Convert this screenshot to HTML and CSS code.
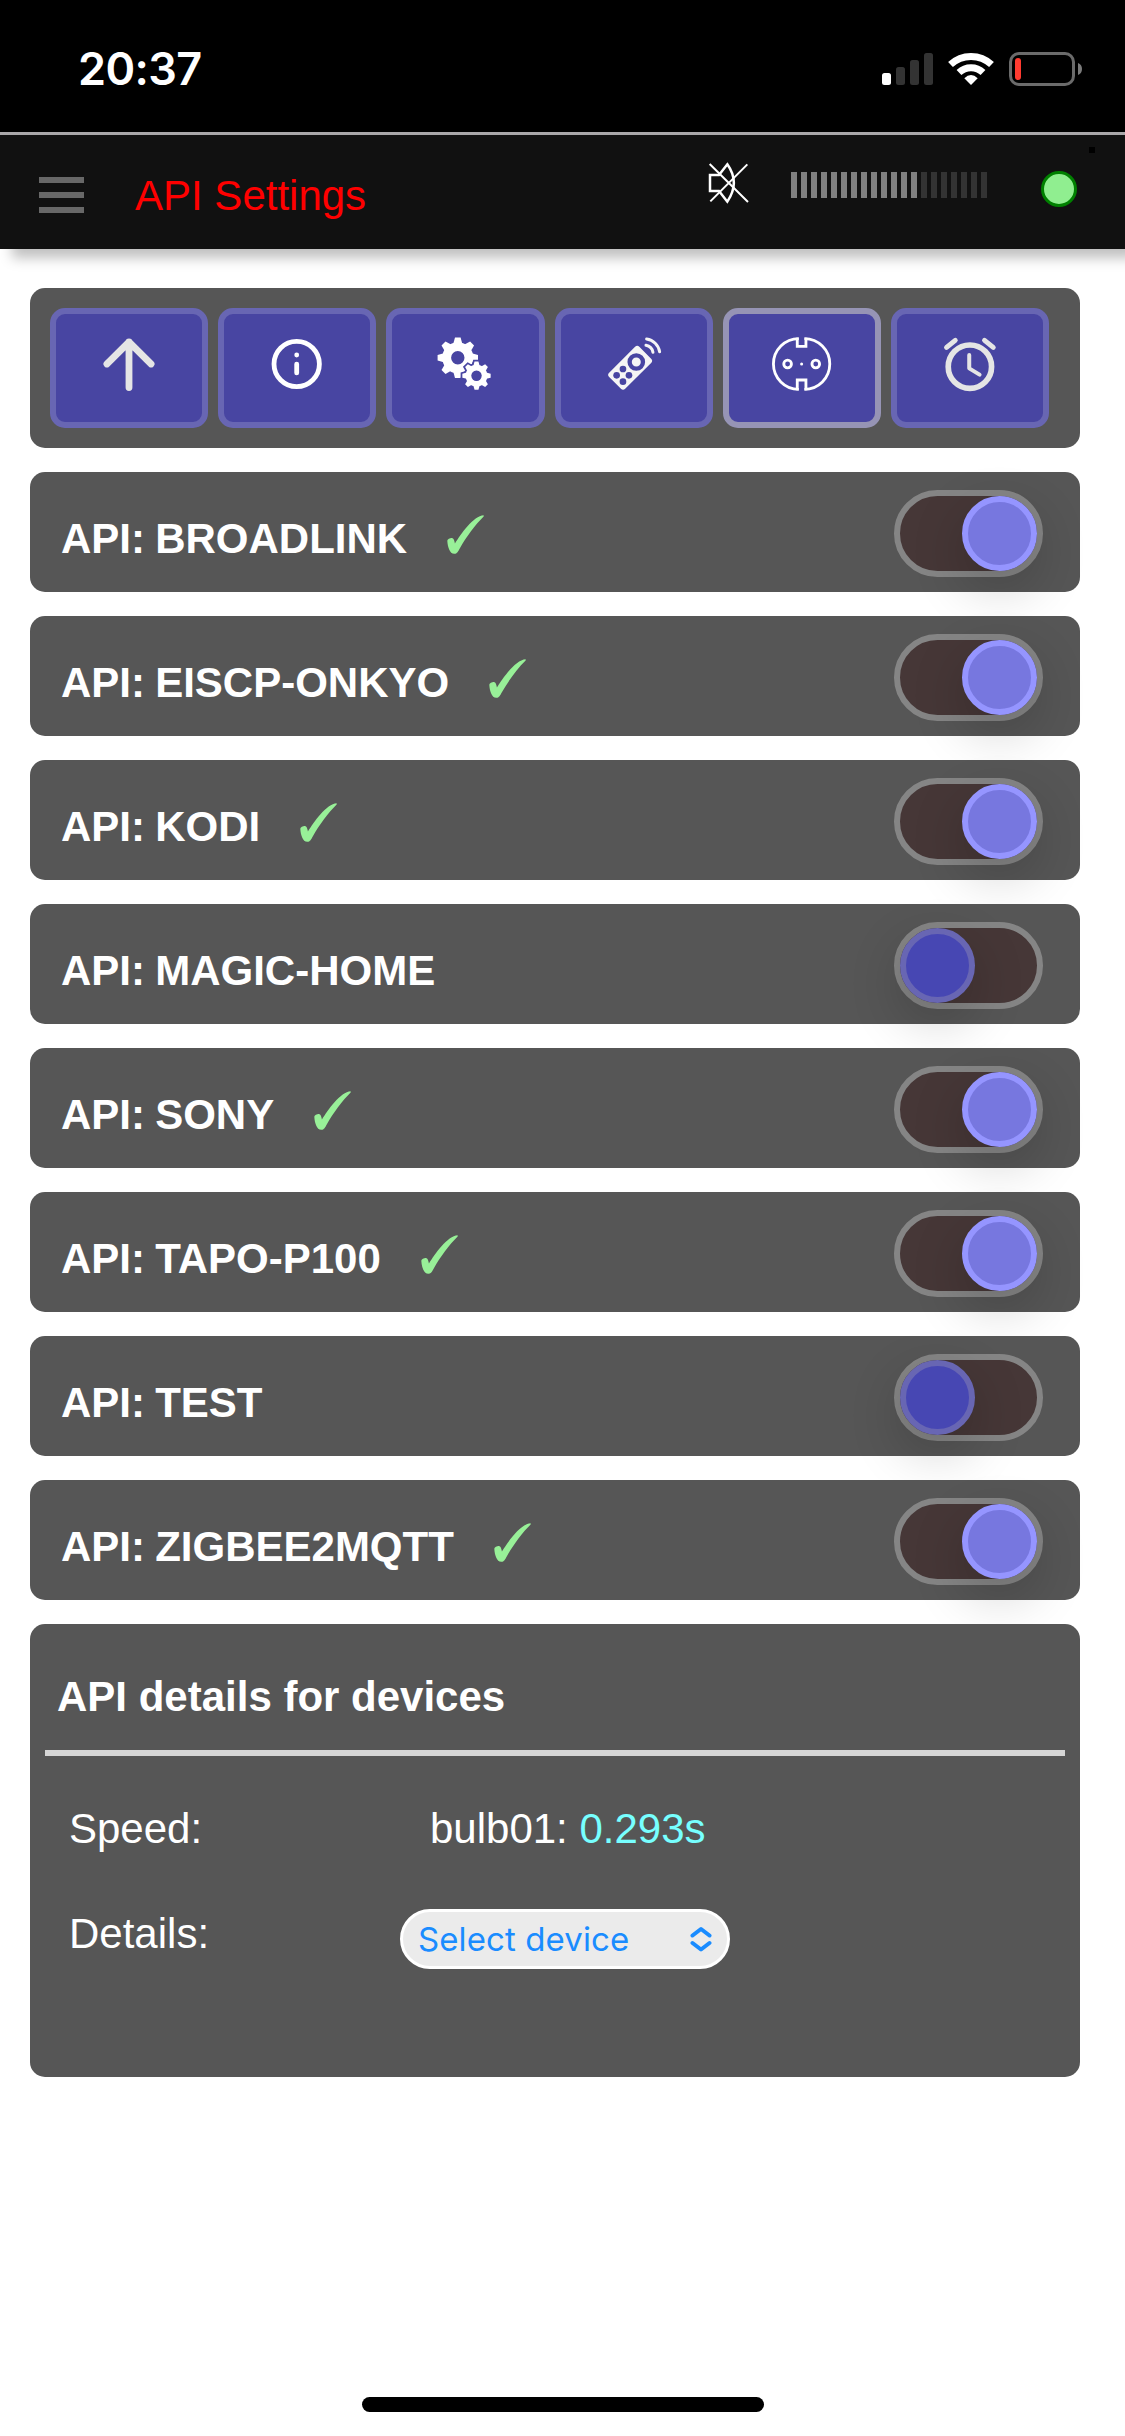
FILE: index.html
```html
<!DOCTYPE html>
<html lang="en">
<head>
<meta charset="utf-8">
<title>API Settings</title>
<link rel="stylesheet" href="styles.css">
</head>
<body>
<svg class="defs" width="0" height="0">
  <defs>
    <symbol id="check" viewBox="0 0 112 120">
      <path d="M111 0C81 1 40 59 24 86C22 76 20 69 15 69C9 69 1 73 1 78C2 95 8 117 22 117C31 117 34 109 39 100C58 67 84 30 111 4Z"/>
    </symbol>
    <g id="gear">
      <path id="tooth" d="M-4.500 -14L-2.800 -20.200H2.800L4.500 -14Z"/>
      <use href="#tooth" transform="rotate(45)"/>
      <use href="#tooth" transform="rotate(90)"/>
      <use href="#tooth" transform="rotate(135)"/>
      <use href="#tooth" transform="rotate(180)"/>
      <use href="#tooth" transform="rotate(225)"/>
      <use href="#tooth" transform="rotate(270)"/>
      <use href="#tooth" transform="rotate(315)"/>
      <path fill-rule="evenodd" d="M-15.500 0A15.500 15.500 0 1 1 15.500 0A15.500 15.500 0 1 1 -15.500 0ZM-6.700 0A6.700 6.700 0 1 0 6.700 0A6.700 6.700 0 1 0 -6.700 0Z"/>
    </g>
  </defs>
</svg>

<div class="status">
  <span class="time">20:37</span>
  <svg class="status-icons" width="201" height="36" viewBox="882 51 201 36">
    <rect x="882" y="73" width="9" height="12" rx="2.5" fill="#fff"/>
    <rect x="896" y="67" width="9" height="18" rx="2.5" fill="#333"/>
    <rect x="910" y="60" width="9" height="25" rx="2.5" fill="#333"/>
    <rect x="924" y="53" width="9" height="32" rx="2.5" fill="#333"/>
    <g fill="none" stroke="#fff" stroke-width="7">
      <path d="M950.5 64.5A30 30 0 0 1 991.5 64.5"/>
      <path d="M959 72.5A17.5 17.5 0 0 1 983 72.5"/>
    </g>
    <path d="M971 85L964.3 78.3Q971 71.800 977.700 78.300Z" fill="#fff"/>
    <rect x="1010.500" y="53.500" width="63" height="31" rx="8.500" fill="none" stroke="#6b6b6b" stroke-width="3"/>
    <path d="M1078 63Q1082 64.500 1082 69T1078 75Z" fill="#7b7b7b"/>
    <rect x="1015" y="58" width="6" height="22" rx="3" fill="#ff3b30"/>
  </svg>
</div>

<header class="bar">
  <div class="menu"><i></i><i></i><i></i></div>
  <h1 class="title">API Settings</h1>
  <svg class="mute" width="42" height="42" viewBox="85 486 126 126" fill="none" stroke="#fff">
    <path stroke-width="7.500" d="M91 525V573H118L143 605Q182 548 143 493L118 525Z"/>
    <path stroke-width="6" d="M90 492L205 606M203 493L92 604"/>
  </svg>
  <div class="volume">
    <i></i><i></i><i></i><i></i><i></i><i></i><i></i><i></i><i></i><i></i><i></i><i></i><i></i>
    <i class="low"></i><i class="low"></i><i class="low"></i><i class="low"></i><i class="low"></i><i class="low"></i><i class="low"></i>
  </div>
  <span class="led"></span>
  <span class="speck"></span>
</header>

<main class="page">
  <nav class="panel tabs">
    <div class="tab">
      <svg class="icon" viewBox="0 0 54 54" fill="none" stroke="#e5e5e5" stroke-width="6.800" stroke-linecap="round" stroke-linejoin="round"><path d="M27 50.500V5M4.900 27L27 5L49.100 27"/></svg>
    </div>
    <div class="tab">
      <svg class="icon" viewBox="0 0 54 54"><circle cx="26.700" cy="27" r="22.700" fill="none" stroke="#fff" stroke-width="4.800"/><circle cx="26.700" cy="18" r="2.400" fill="#fff"/><rect x="24.300" y="24.700" width="4.800" height="13.600" rx="2.400" fill="#fff"/></svg>
    </div>
    <div class="tab">
      <svg class="icon" viewBox="0 0 54 54">
        <use href="#gear" transform="translate(19.800 20.700)" fill="#fff"/>
        <use href="#gear" transform="translate(38.500 38.700) scale(.7)" class="gear-gap"/>
        <use href="#gear" transform="translate(38.500 38.700) scale(.7)" fill="#fff"/>
        <circle cx="38.500" cy="38.700" r="5.200" fill="#4845a2"/>
      </svg>
    </div>
    <div class="tab">
      <svg class="icon" viewBox="0 0 54 54">
        <g transform="translate(-226.700 -47) scale(.33333)" fill="#4845a2">
          <rect x="-34" y="-64" width="68" height="128" rx="9" transform="translate(749.500 233.500) rotate(45)" fill="#f5f5f5"/>
          <circle cx="768" cy="216" r="20" fill="none" stroke="#4845a2" stroke-width="13"/>
          <circle cx="728" cy="237" r="10"/><circle cx="709" cy="256" r="10"/><circle cx="746" cy="256" r="10"/><circle cx="728" cy="275" r="10"/>
          <g fill="none" stroke="#f5f5f5" stroke-width="9" stroke-linecap="round"><path d="M799 147A46 46 0 0 1 838 185"/><path d="M797 166A26 26 0 0 1 818 187"/></g>
        </g>
      </svg>
    </div>
    <div class="tab active">
      <svg class="icon" viewBox="0 0 54 54">
        <g transform="translate(-74.900 -67) scale(.33333)" fill="none" stroke="#fff" stroke-width="8.500">
          <path d="M296 206A76 76 0 0 0 296 358M313 206A76 76 0 0 1 313 358"/>
          <path d="M291.500 203V229H317.500V203M291.500 361V330H317.500V361"/>
          <circle cx="262.500" cy="282" r="11.500"/><circle cx="347" cy="282" r="11.500"/>
          <circle cx="304.500" cy="282" r="4.500" fill="#fff" stroke="none"/>
        </g>
      </svg>
    </div>
    <div class="tab">
      <svg class="icon" viewBox="0 0 54 54">
        <g transform="translate(-243.100 -67) scale(.33333)" fill="none" stroke="#e5e5e5" stroke-linecap="round" stroke-linejoin="round">
          <circle cx="810" cy="290" r="65" stroke-width="17"/>
          <path d="M808 255V295L839 314" stroke-width="12"/>
          <path d="M740 232L766 211M854 211L880 232" stroke-width="15"/>
        </g>
      </svg>
    </div>
  </nav>

  <section class="panel row"><b class="name">API: BROADLINK</b><svg class="check"><use href="#check"/></svg><span class="toggle on"><i></i></span></section>
  <section class="panel row"><b class="name">API: EISCP-ONKYO</b><svg class="check"><use href="#check"/></svg><span class="toggle on"><i></i></span></section>
  <section class="panel row"><b class="name">API: KODI</b><svg class="check"><use href="#check"/></svg><span class="toggle on"><i></i></span></section>
  <section class="panel row"><b class="name">API: MAGIC-HOME</b><span class="toggle"><i></i></span></section>
  <section class="panel row"><b class="name">API: SONY</b><svg class="check"><use href="#check"/></svg><span class="toggle on"><i></i></span></section>
  <section class="panel row"><b class="name">API: TAPO-P100</b><svg class="check"><use href="#check"/></svg><span class="toggle on"><i></i></span></section>
  <section class="panel row"><b class="name">API: TEST</b><span class="toggle"><i></i></span></section>
  <section class="panel row"><b class="name">API: ZIGBEE2MQTT</b><svg class="check"><use href="#check"/></svg><span class="toggle on"><i></i></span></section>

  <section class="panel details">
    <h2 class="heading">API details for devices</h2>
    <div class="line speed"><span class="label">Speed:</span><span class="value">bulb01: <span class="num">0.293s</span></span></div>
    <div class="line"><span class="label">Details:</span>
      <div class="select"><span>Select device</span>
        <svg width="22" height="26" viewBox="0 0 22 26" fill="none" stroke="#1a8cff" stroke-width="4" stroke-linecap="round" stroke-linejoin="round"><path d="M2.500 9.500L11 3L19.500 9.500M2.500 17L11 23.500L19.500 17"/></svg>
      </div>
    </div>
  </section>
</main>
<div class="home"></div>
</body>
</html>
```
FILE: styles.css
```css
* { box-sizing: border-box; }
body {
  margin: 0;
  width: 1125px;
  height: 2436px;
  display: flex;
  flex-direction: column;
  background: #fff;
  color: #fff;
  font: 42px/48px "Liberation Sans", Arial, sans-serif;
  overflow: hidden;
}
.defs { position: absolute; }
h1, h2 { margin: 0; font-size: 42px; }

.status {
  flex: none;
  height: 132px;
  background: #000;
  display: flex;
  justify-content: space-between;
  align-items: flex-start;
  padding: 42px 42px 0 78px;
}
.time { font: 600 45px/54px Inter, sans-serif; letter-spacing: -.6px; }
.status-icons { margin-top: 9px; }

.bar {
  position: relative;
  flex: none;
  height: 117px;
  background: #111;
  border-top: 3px solid #a9a7a9;
  box-shadow: 12px 9px 12px rgba(0, 0, 0, .25);
  display: flex;
  align-items: flex-start;
  padding-left: 39px;
}
.menu { display: flex; flex-direction: column; gap: 9px; margin-top: 42px; width: 45px; }
.menu i { height: 6px; background: #686868; }
.title { width: 573px; margin: 37px 0 0 51px; font-weight: 400; color: #f00; }
.mute { margin-top: 27px; }
.volume { display: flex; gap: 4px; margin: 37px 0 0 41px; }
.volume i { width: 6px; height: 26px; background: #808080; }
.volume .low { background: #333; }
.led { width: 36px; height: 36px; margin: 36px 0 0 54px; border: 3px solid #008000; border-radius: 50%; background: #90ee90; }
.speck { width: 6px; height: 6px; margin: 12px 0 0 12px; background: #000; }

.page { display: flex; flex-direction: column; gap: 24px; padding: 39px 45px 0 30px; }
.panel { background: #565656; border-radius: 15px; }
.tabs { display: grid; grid-template-columns: repeat(6, 1fr); gap: 10px; height: 160px; padding: 20px 31px 20px 20px; }
.tab {
  display: flex;
  align-items: center;
  justify-content: center;
  border: 6px solid #6866b3;
  border-radius: 15px;
  background: #4845a2;
}
.tab.active { border-color: #9694b5; }
.icon { width: 54px; height: 54px; margin-bottom: 8px; overflow: visible; }
.gear-gap { fill: #4845a2; stroke: #4845a2; stroke-width: 5; }

.row { display: flex; align-items: flex-start; height: 120px; padding: 18px 37px 0 31px; }
.name { margin-top: 25px; white-space: nowrap; word-spacing: -1.5px; }
.check { width: 37px; height: 40px; margin: 25px 0 0 40px; fill: #98f098; }
.toggle {
  display: flex;
  width: 149px;
  height: 87px;
  margin-left: auto;
  border: 6px solid #858585;
  border-radius: 44px;
  background: #463737;
}
.toggle i {
  width: 75px;
  height: 75px;
  border: 6px solid #6866b3;
  border-radius: 50%;
  background: #4747b3;
  box-shadow: 0 18px 54px rgba(0, 0, 0, .2);
}
.toggle.on { justify-content: flex-end; }
.toggle.on i { border-color: #9595ff; background: #7777df; }

.details { height: 453px; padding: 0 15px; }
.heading { height: 132px; padding: 49px 0 0 12px; border-bottom: 6px solid #d6d6d6; }
.line { display: flex; align-items: flex-start; padding-left: 24px; height: 105px; }
.speed { margin-top: 48px; }
.label { width: 331px; padding-top: 1px; }
.speed .label { width: 361px; }
.value { padding-top: 1px; }
.num { color: #7ff; }
.select {
  display: flex;
  align-items: center;
  justify-content: space-between;
  width: 330px;
  height: 60px;
  padding: 0 15px 0 15px;
  border: 3px solid #fff;
  border-radius: 30px;
  background: #ebebeb;
  color: #1a8cff;
  font: 33px/54px Inter, sans-serif;
  letter-spacing: .1px;
}
.home { flex: none; width: 402px; height: 15px; margin: auto 0 24px 362px; border-radius: 8px; background: #000; }
```
